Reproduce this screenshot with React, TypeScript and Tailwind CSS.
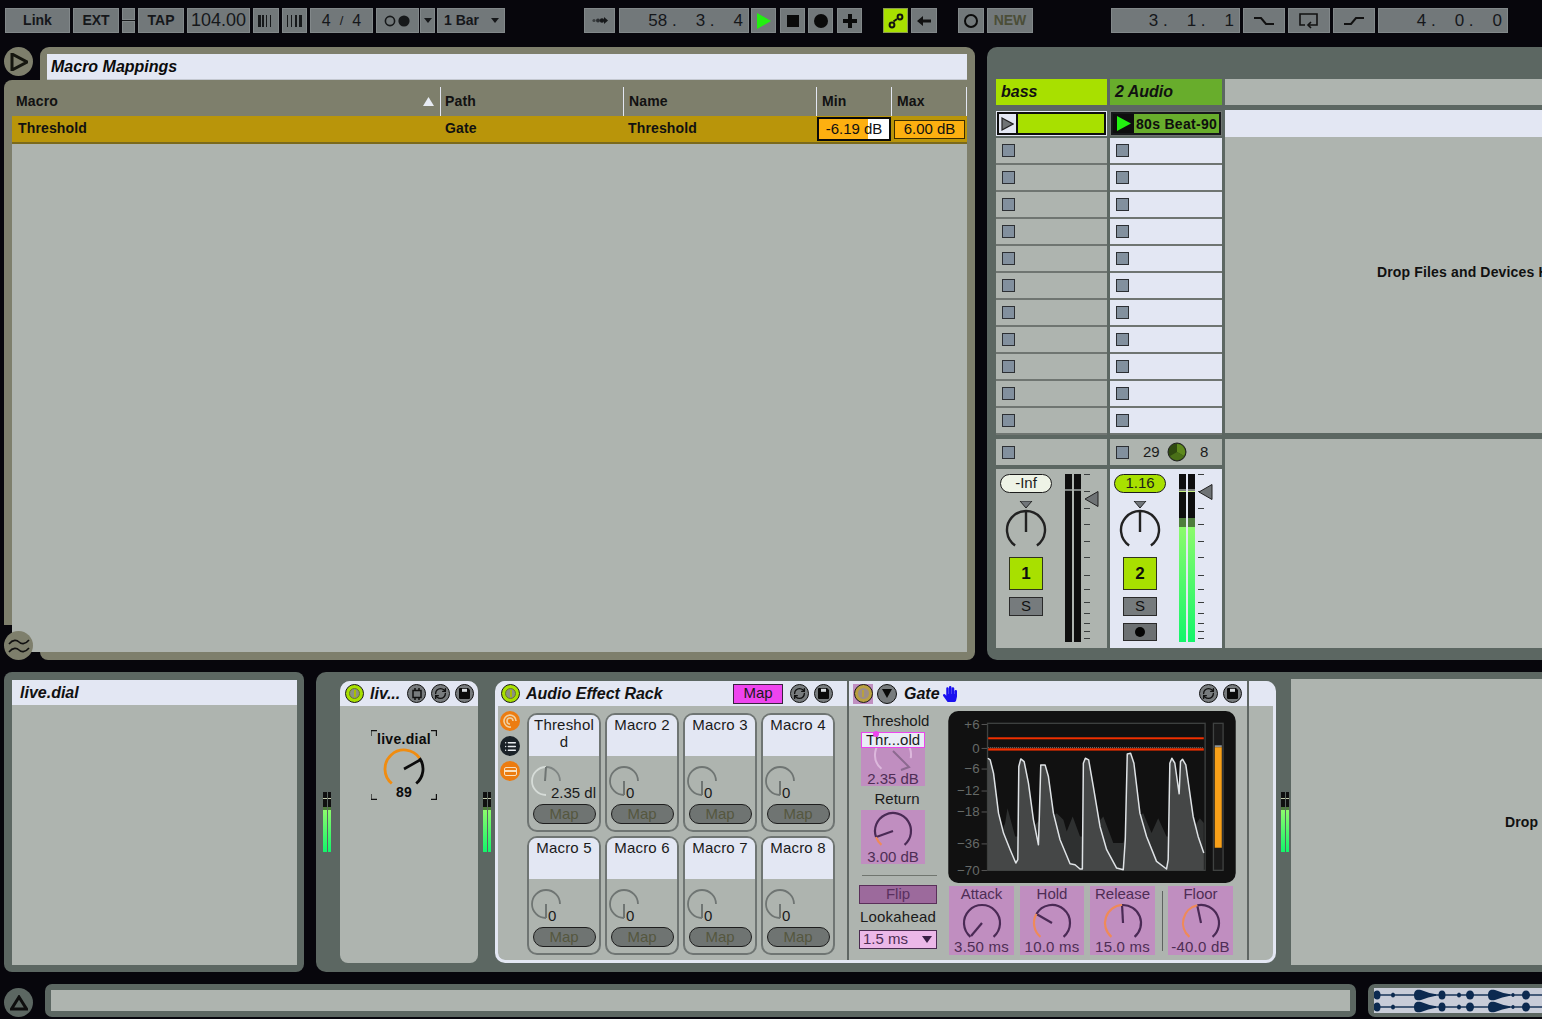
import React from "react";
import { List, RefreshCw } from "lucide-react";
import { FaHandPaper } from "react-icons/fa";

const pt = (cx: number, cy: number, r: number, a: number) => {
  const t = (a * Math.PI) / 180;
  return [+(cx + r * Math.sin(t)).toFixed(2), +(cy - r * Math.cos(t)).toFixed(2)];
};
const arc = (cx: number, cy: number, r: number, a0: number, a1: number) => {
  const [x0, y0] = pt(cx, cy, r, a0);
  const [x1, y1] = pt(cx, cy, r, a1);
  return `M${x0} ${y0}A${r} ${r} 0 ${a1 - a0 > 180 ? 1 : 0} 1 ${x1} ${y1}`;
};

const ctl =
  "h-[25px] shrink-0 bg-[#72787a] border border-[#82888a] flex items-center justify-center text-[#15171a] whitespace-nowrap";

function Bars({ reverse }: { reverse?: boolean }) {
  const w = [3, 2, 1, 1];
  const list = reverse ? [1, 1, 2, 3] : w;
  return (
    <svg width="18" height="12" viewBox="0 0 18 12">
      {list.map((b, i) => (
        <rect key={i} x={1 + i * 4} y="0" width={b} height="12" fill="#16181a" />
      ))}
    </svg>
  );
}

function Toolbar() {
  return (
    <div className="h-[47px] shrink-0 pt-[8px] pl-[5px] flex items-start">
      <div className={`${ctl} w-[65px] font-bold text-[14px]`}>Link</div>
      <div className={`${ctl} w-[46px] ml-[3px] font-bold text-[14px]`}>EXT</div>
      <div className="w-[13px] ml-[3px] h-[25px] flex flex-col shrink-0">
        <div className="h-[12px] bg-[#72787a] border border-[#82888a]" />
        <div className="h-[1px] bg-[#16181a]" />
        <div className="h-[12px] bg-[#72787a] border border-[#82888a]" />
      </div>
      <div className={`${ctl} w-[46px] ml-[3px] font-bold text-[14px]`}>TAP</div>
      <div className={`${ctl} w-[63px] ml-[3px] text-[18px]`}>104.00</div>
      <div className={`${ctl} w-[26px] ml-[3px]`}><Bars /></div>
      <div className={`${ctl} w-[25px] ml-[3px]`}><Bars reverse /></div>
      <div className={`${ctl} w-[63px] ml-[3px] text-[16px] gap-[9px]`}><span>4</span><span className="text-[13px]">/</span><span>4</span></div>
      <div className={`${ctl} w-[43px] ml-[3px]`}>
        <svg width="28" height="14" viewBox="0 0 28 14">
          <circle cx="6" cy="7" r="4.6" fill="none" stroke="#16181a" strokeWidth="1.6" />
          <circle cx="20" cy="7" r="5.6" fill="#16181a" />
        </svg>
      </div>
      <div className={`${ctl} w-[15px] ml-[1px]`}>
        <svg width="8" height="5"><path d="M0 0H8L4 5Z" fill="#16181a" /></svg>
      </div>
      <div className={`${ctl} w-[68px] ml-[2px] !justify-between pl-[6px] pr-[5px] font-bold text-[14px]`}>
        <span>1 Bar</span>
        <svg width="8" height="5"><path d="M0 0H8L4 5Z" fill="#16181a" /></svg>
      </div>

      <div className={`${ctl} w-[31px] ml-[79px]`}>
        <svg width="18" height="9" viewBox="0 0 18 9">
          <circle cx="3" cy="4.5" r="1.6" fill="#3a3e40" />
          <circle cx="7" cy="4.5" r="2" fill="#2a2d30" />
          <circle cx="11" cy="4.5" r="2.2" fill="#16181a" />
          <path d="M13 1L17 4.5L13 8Z" fill="#16181a" />
        </svg>
      </div>
      <div className={`${ctl} w-[130px] ml-[4px] !justify-end pr-[5px] text-[17px] gap-[19px]`}>
        <span>58 .</span><span>3 .</span><span>4</span>
      </div>
      <div className={`${ctl} w-[25px] ml-[2px]`}>
        <svg width="14" height="16"><path d="M0 0L14 8L0 16Z" fill="#22f010" /></svg>
      </div>
      <div className={`${ctl} w-[25px] ml-[4px]`}><div className="w-[12px] h-[12px] bg-[#0a0a0a]" /></div>
      <div className={`${ctl} w-[25px] ml-[3px]`}><div className="w-[14px] h-[14px] rounded-full bg-[#0a0a0a]" /></div>
      <div className={`${ctl} w-[25px] ml-[4px]`}>
        <svg width="14" height="14"><path d="M5 0H9V5H14V9H9V14H5V9H0V5H5Z" fill="#0a0a0a" /></svg>
      </div>
      <div className={`${ctl} w-[25px] ml-[21px] !bg-[#a8e000] !border-[#8a9a50]`}>
        <svg width="16" height="16" viewBox="0 0 16 16" fill="none" stroke="#111" strokeWidth="2">
          <circle cx="4" cy="12" r="2.4" />
          <circle cx="12" cy="4" r="2.4" />
          <path d="M5.5 8.5L9 6" />
        </svg>
      </div>
      <div className={`${ctl} w-[26px] ml-[3px]`}>
        <svg width="14" height="10"><path d="M0 5L6 0V3.5H14V6.5H6V10Z" fill="#111" /></svg>
      </div>
      <div className={`${ctl} w-[26px] ml-[21px]`}>
        <div className="w-[14px] h-[14px] rounded-full border-2 border-[#0a0a0a]" />
      </div>
      <div className={`${ctl} w-[46px] ml-[3px] font-bold text-[14px] !text-[#4b4e38]`}>NEW</div>

      <div className={`${ctl} w-[129px] ml-[78px] !justify-end pr-[5px] text-[17px] gap-[19px]`}>
        <span>3 .</span><span>1 .</span><span>1</span>
      </div>
      <div className={`${ctl} w-[42px] ml-[3px]`}>
        <svg width="20" height="12" fill="none" stroke="#111" strokeWidth="2"><path d="M0 3H7L12 9H20" /></svg>
      </div>
      <div className={`${ctl} w-[42px] ml-[3px]`}>
        <svg width="20" height="16" viewBox="0 0 20 16" fill="none" stroke="#111" strokeWidth="1.6">
          <path d="M6 12H1V1H18V12H10" />
          <path d="M12 9L9 12L12 15" />
        </svg>
      </div>
      <div className={`${ctl} w-[42px] ml-[3px]`}>
        <svg width="20" height="12" fill="none" stroke="#111" strokeWidth="2"><path d="M0 9H7L12 3H20" /></svg>
      </div>
      <div className={`${ctl} w-[130px] ml-[3px] !justify-end pr-[5px] text-[17px] gap-[19px]`}>
        <span>4 .</span><span>0 .</span><span>0</span>
      </div>
    </div>
  );
}

function CircleBtn({ className, children }: { className: string; children: React.ReactNode }) {
  return (
    <div className={`w-[29px] h-[29px] rounded-full flex items-center justify-center shrink-0 ${className}`}>
      {children}
    </div>
  );
}

function MacroPanel() {
  return (
    <div className="w-[971px] ml-[4px] flex flex-col relative">
      <div className="h-[33px] flex shrink-0">
        <div className="w-[36px]">
          <CircleBtn className="bg-[#7e7f6c]">
            <svg width="18" height="18"><path d="M2 1L17 9L2 17Z" fill="none" stroke="#15160f" strokeWidth="3" /></svg>
          </CircleBtn>
        </div>
        <div className="flex-1 bg-[#7e7f6c] rounded-t-[9px] pt-[7px] pl-[7px] pr-[8px]">
          <div className="h-[26px] bg-[#e3e7f3] border-b border-[#c4c8d0] flex items-center pl-[4px] font-bold italic text-[16px] text-[#0b0b0b]">
            Macro Mappings
          </div>
        </div>
      </div>
      <div className="flex-1 flex min-h-0">
        <div className="w-[8px] h-[545px] bg-[#7e7f6c] rounded-tl-[8px]" />
        <div className="flex-1 flex flex-col bg-[#7e7f6c]">
          <div className="h-[36px] pt-[7px] flex text-[14px] font-bold tracking-[0.15px] text-[#111]">
            <div className="w-[428px] h-[29px] flex items-center justify-between pl-[4px] pr-[6px]">
              <span>Macro</span>
              <svg width="11" height="9"><path d="M0 9L5.5 0L11 9Z" fill="#e8ecf4" /></svg>
            </div>
            <div className="w-[183px] h-[29px] border-l border-[#e3e7f3] pl-[4px] flex items-center">Path</div>
            <div className="w-[193px] h-[29px] border-l border-[#e3e7f3] pl-[5px] flex items-center">Name</div>
            <div className="w-[75px] h-[29px] border-l border-[#e3e7f3] pl-[5px] flex items-center">Min</div>
            <div className="w-[76px] h-[29px] border-x border-[#e3e7f3] pl-[5px] flex items-center">Max</div>
          </div>
          <div className="h-[28px] bg-[#b9950a] border-b-2 border-[#7b6a1c] flex items-center text-[14px] font-bold tracking-[0.15px] text-[#111]">
            <div className="w-[429px] pl-[6px] pb-[1px]">Threshold</div>
            <div className="w-[183px] pl-[4px] pb-[1px]">Gate</div>
            <div className="w-[193px] pl-[4px] pb-[1px]">Threshold</div>
            <div className="w-[74px] h-[24px] border-2 border-[#0a0a0a] bg-[linear-gradient(90deg,#fdb010_70%,#ffffff_70%)] flex items-center justify-center font-normal text-[15px] tracking-normal">-6.19 dB</div>
            <div className="w-[71px] h-[19px] ml-[3px] border border-[#3a2c00] bg-[#fdb010] flex items-center justify-center font-normal text-[15px] tracking-normal">6.00 dB</div>
          </div>
          <div className="flex-1 bg-[#aeb4af]" />
        </div>
        <div className="w-[8px] bg-[#7e7f6c]" />
      </div>
      <div className="h-[8px] shrink-0 flex">
        <div className="w-[36px]" />
        <div className="flex-1 bg-[#7e7f6c] rounded-b-[8px]" />
      </div>
      <div className="absolute left-0 bottom-0 w-[29px] h-[29px] rounded-full bg-[#7e7f6c] flex items-center justify-center">
        <svg width="22" height="16" viewBox="0 0 22 16" fill="none" stroke="#111" strokeWidth="1.6">
          <path d="M1 6C5 1 9 2 11 4S17 7 21 2" />
          <path d="M1 14C5 9 9 10 11 12S17 15 21 10" />
        </svg>
      </div>
    </div>
  );
}

const TICKS = [0, 17, 34, 50, 67, 83, 101, 115, 128, 139, 149, 157, 164];

function Mixer({ id, vol, pillBg, arm, tri, active }: { id: string; vol: string; pillBg: string; arm?: boolean; tri: number; active?: boolean }) {
  return (
    <div className="h-[179px] flex">
      <div className="w-[60px] flex flex-col items-center">
        <div className={`mt-[5px] w-[52px] h-[19px] rounded-full border border-[#1c1c1c] flex items-center justify-center text-[15px] text-[#1c1c1c] ${pillBg}`}>{vol}</div>
        <svg className="mt-[8px]" width="42" height="48" viewBox="0 0 42 48" fill="none">
          <path d="M15 0H27L21 7Z" fill="#71767a" stroke="#222" strokeWidth="1" />
          <path d={arc(21, 29, 19, -145, 145)} stroke="#222" strokeWidth="2.4" />
          <path d="M21 10V31" stroke="#222" strokeWidth="2.4" />
        </svg>
        <div className="mt-[8px] w-[34px] h-[33px] bg-[#a8e000] border border-[#30341c] flex items-center justify-center font-bold text-[17px] text-[#0e0e0e]">{id}</div>
        <div className="mt-[7px] w-[34px] h-[19px] bg-[#767b7d] border border-[#2a2a2a] flex items-center justify-center text-[15px] text-[#111]">S</div>
        {arm && (
          <div className="mt-[7px] w-[34px] h-[18px] bg-[#6c7072] border border-[#2a2a2a] flex items-center justify-center">
            <div className="w-[10px] h-[10px] rounded-full bg-[#050505]" />
          </div>
        )}
      </div>
      <div className="ml-[9px] mt-[5px] h-[168px] flex gap-[2px]">
        {[0, 1].map((i) => (
          <div key={i} className="w-[7px] h-full bg-[#0e0e0e] flex flex-col">
            <div className="h-[15px]" />
            <div className="h-[2px] bg-[#7d8280]" />
            {active ? (
              <>
                <div className="h-[1px] bg-[#c8f080]" />
                <div className="h-[26px]" />
                <div className="h-[9px] bg-[#4e7d3c]" />
                <div className="flex-1 bg-[linear-gradient(180deg,#8cfb6c,#12f56a)]" />
              </>
            ) : null}
          </div>
        ))}
      </div>
      <svg className="ml-[3px] mt-[5px]" width="16" height="168" viewBox="0 0 16 168">
        {TICKS.map((t) => (
          <rect key={t} x="0" y={t} width="6" height="1" fill="#3a3e3e" />
        ))}
        <path d={`M1 ${tri}L14 ${tri - 7.5}V${tri + 7.5}Z`} fill="#6f7375" stroke="#222" strokeWidth="1" />
      </svg>
    </div>
  );
}

function Stop() {
  return <div className="w-[13px] h-[13px] bg-[#82909e] border border-[#2c2f33]" />;
}

function Session() {
  const rows = Array.from({ length: 11 });
  return (
    <div className="flex-1 ml-[12px] bg-[#5c6762] rounded-tl-[10px] rounded-bl-[10px] pl-[9px] pt-[32px] pb-[12px] flex gap-[3px] overflow-hidden">
      <div className="w-[111px] shrink-0 flex flex-col">
        <div className="h-[26px] bg-[#a8e000] flex items-center pl-[5px] font-bold italic text-[16px] text-[#111]">bass</div>
        <div className="mt-[5px] h-[28px] shrink-0 pt-[1px]">
          <div className="h-[25px] bg-[#e3e7f3] p-[1px]">
            <div className="h-[23px] border-2 border-[#0e0e0e] flex bg-[#a8e000]">
              <div className="w-[19px] bg-[#e3e7f3] border-r-2 border-[#0e0e0e] flex items-center justify-center">
                <svg width="13" height="14"><path d="M1 1L12 7L1 13Z" fill="#6f7375" stroke="#222" strokeWidth="1.2" /></svg>
              </div>
            </div>
          </div>
        </div>
        {rows.map((_, i) => (
          <div key={i} className="h-[27px] shrink-0 bg-[#aeb4af] flex items-center pl-[6px] border-b-2 border-[#6f7571]"><Stop /></div>
        ))}
        <div className="mt-[4px] h-[26px] shrink-0 bg-[#aeb4af] flex items-center pl-[6px]"><Stop /></div>
        <div className="mt-[4px] bg-[#aeb4af]">
          <Mixer id="1" vol="-Inf" pillBg="bg-[#eef3e6]" tri={25} />
        </div>
      </div>
      <div className="w-[112px] shrink-0 flex flex-col">
        <div className="h-[26px] bg-[#68ad2c] flex items-center pl-[5px] font-bold italic text-[16px] text-[#111]">2 Audio</div>
        <div className="mt-[5px] h-[28px] shrink-0 pt-[1px]">
          <div className="h-[25px] bg-[#6f7571] p-[1px]">
            <div className="h-[23px] border-2 border-[#16181a] flex bg-[#68ad2c] items-center">
              <div className="w-[21px] h-full bg-[#0e0e0e] flex items-center justify-center shrink-0">
                <svg width="14" height="15"><path d="M0 0L14 7.5L0 15Z" fill="#22f010" /></svg>
              </div>
              <span className="pl-[2px] pt-[1px] font-bold text-[14px] tracking-[0.3px] text-[#0e0e0e] whitespace-nowrap">80s Beat-90</span>
            </div>
          </div>
        </div>
        {rows.map((_, i) => (
          <div key={i} className="h-[27px] shrink-0 bg-[#e3e7f3] flex items-center pl-[6px] border-b-2 border-[#6f7571]"><Stop /></div>
        ))}
        <div className="mt-[4px] h-[26px] shrink-0 bg-[#aeb4af] flex items-center pl-[6px] text-[15px] text-[#1b1b1b]">
          <Stop />
          <span className="ml-[14px] w-[24px]">29</span>
          <svg width="20" height="20" viewBox="0 0 20 20">
            <circle cx="10" cy="10" r="9" fill="#2f4a10" stroke="#222" strokeWidth="1" />
            <path d="M10 10V2A8 8 0 0 1 17 14Z" fill="#5f8a1e" />
            <path d="M10 10L17 14A8 8 0 0 1 3 14Z" fill="#4a7018" />
          </svg>
          <span className="ml-[13px]">8</span>
        </div>
        <div className="mt-[4px] bg-[#e3e7f3]">
          <Mixer id="2" vol="1.16" pillBg="bg-[#a8e000]" arm tri={18} active />
        </div>
      </div>
      <div className="flex-1 flex flex-col min-w-0">
        <div className="h-[26px] bg-[#aeb4af] shrink-0" />
        <div className="mt-[5px] h-[27px] bg-[#e3e7f3] shrink-0" />
        <div className="h-[296px] shrink-0 bg-[#aeb4af] flex items-center pl-[152px] font-bold text-[14px] tracking-[0.15px] text-[#111] whitespace-nowrap pb-[26px]">
          Drop Files and Devices Here
        </div>
        <div className="mt-[6px] h-[209px] bg-[#aeb4af] shrink-0" />
      </div>
    </div>
  );
}

function Meter({ className }: { className: string }) {
  return (
    <div className={`w-[8px] h-[60px] flex gap-[1px] shrink-0 ${className}`}>
      {[0, 1].map((i) => (
        <div key={i} className="flex-1 flex flex-col bg-[#101010]">
          <div className="h-[6px]" />
          <div className="h-[1px] bg-[#c0c8a8]" />
          <div className="h-[8px]" />
          <div className="h-[3px] bg-[#4e7d3c]" />
          <div className="flex-1 bg-[linear-gradient(180deg,#8cfb6c,#12f56a)]" />
        </div>
      ))}
    </div>
  );
}

function Activator() {
  return (
    <div className="w-[19px] h-[19px] rounded-full border border-[#1a1a1a] bg-[#a8e000] flex items-center justify-center shrink-0">
      <div className="w-[11px] h-[11px] rounded-full bg-[#8b9184] flex items-center justify-center border border-[#6a7a20]">
        <div className="w-[2px] h-[7px] bg-[#a8c000]" />
      </div>
    </div>
  );
}

function HBtn({ children }: { children: React.ReactNode }) {
  return (
    <div className="w-[19px] h-[19px] rounded-full bg-[#777b7d] border-[1.5px] border-[#111] flex items-center justify-center shrink-0">
      {children}
    </div>
  );
}

function Floppy() {
  return (
    <svg width="11" height="11" viewBox="0 0 11 11">
      <path d="M0 1Q0 0 1 0H9L11 2V10Q11 11 10 11H1Q0 11 0 10Z" fill="#0a0a0a" />
      <rect x="3" y="0.8" width="5" height="3" fill="#d8dce0" />
    </svg>
  );
}

function Swap() {
  return <RefreshCw size={13} strokeWidth={2.5} color="#111" />;
}

function LiveDevice() {
  return (
    <div className="w-[138px] h-[282px] rounded-t-[10px] rounded-b-[8px] overflow-hidden bg-[#aeb4af] flex flex-col shrink-0">
      <div className="h-[25px] bg-[#e3e7f3] flex items-center pl-[5px] shrink-0">
        <Activator />
        <span className="ml-[6px] w-[37px] font-bold italic text-[16px] text-[#111]">liv...</span>
        <div className="flex gap-[5px]">
          <HBtn>
            <svg width="12" height="12" viewBox="0 0 12 12" fill="none" stroke="#111" strokeWidth="1.5">
              <rect x="2" y="2.5" width="8" height="7" />
              <path d="M4 0V2.5M8 0V2.5M4 9.5V12M8 9.5V12" />
            </svg>
          </HBtn>
          <HBtn><Swap /></HBtn>
          <HBtn><Floppy /></HBtn>
        </div>
      </div>
      <div className="ml-[31px] mt-[24px] w-[66px] h-[70px] relative flex flex-col items-center text-[#0b0b0b] font-bold">
        <svg className="absolute inset-0" width="66" height="70" viewBox="0 0 66 70" fill="none" stroke="#111" strokeWidth="1.2">
          <path d="M0 6V0.6H6M60 0.6H65.4V6M0 64V69.4H6M60 69.4H65.4V64" />
        </svg>
        <span className="text-[14px] leading-[18px] tracking-[0.3px]">live.dial</span>
        <svg width="44" height="42" viewBox="0 0 44 42" fill="none" className="-mt-[1px]">
          <path d={arc(22, 22, 19, -140, 55)} stroke="#f08c10" strokeWidth="2.8" />
          <path d={arc(22, 22, 19, 55, 140)} stroke="#0c0c0c" strokeWidth="2.8" />
          <path d="M22 22L38 13" stroke="#0c0c0c" strokeWidth="2.6" />
        </svg>
        <span className="-mt-[5px] text-[14px] leading-[16px] tracking-[0.3px]">89</span>
      </div>
    </div>
  );
}

function MacroCell({ name, value, active }: { name: string; value: string; active?: boolean }) {
  return (
    <div className="h-[119px] rounded-[10px] border-2 border-[#6f7573] overflow-hidden flex flex-col items-center">
      <div className="w-full h-[41px] bg-[#e3e7f3] text-center text-[15px] leading-[17px] tracking-[0.2px] pt-[1px] text-[#1a1a1a] break-all px-[2px] shrink-0">{name}</div>
      <div className="w-full h-[49px] flex items-end relative shrink-0">
        <svg width="30" height="30" viewBox="0 0 30 30" fill="none" className="absolute left-[2px] top-[10px]">
          {active ? (
            <>
              <path d={arc(15, 15, 14, 180, 360)} stroke="#d6dcd8" strokeWidth="1.8" />
              <path d={arc(15, 15, 14, 0, 90)} stroke="#7f8583" strokeWidth="1.8" />
              <path d="M15 1L14 15" stroke="#6f7573" strokeWidth="2" />
            </>
          ) : (
            <>
              <path d={arc(15, 15, 14, 180, 450)} stroke="#6f7573" strokeWidth="1.8" />
              <path d="M15 15V29" stroke="#6f7573" strokeWidth="2" />
            </>
          )}
        </svg>
        <span className={`${active ? "ml-[22px]" : "ml-[19px]"} mb-[4px] text-[15px] leading-[16px] text-[#1a1a1a] whitespace-nowrap relative`}>{value}</span>
      </div>
      <div className="mt-[-1px] w-[63px] h-[20px] rounded-full bg-[#6f7472] border border-[#1e1e1e] flex items-center justify-center text-[15px] text-[#55573f] shrink-0">Map</div>
    </div>
  );
}

function Rack() {
  const cells: [string, string, boolean?][] = [
    ["Threshold", "2.35 dl", true],
    ["Macro 2", "0"],
    ["Macro 3", "0"],
    ["Macro 4", "0"],
    ["Macro 5", "0"],
    ["Macro 6", "0"],
    ["Macro 7", "0"],
    ["Macro 8", "0"],
  ];
  return (
    <div className="w-[349px] shrink-0 flex flex-col">
      <div className="h-[25px] bg-[#e3e7f3] flex items-center pl-[3px] pr-[14px] shrink-0">
        <Activator />
        <span className="ml-[6px] font-bold italic text-[16px] text-[#111]">Audio Effect Rack</span>
        <div className="ml-auto w-[50px] h-[20px] bg-[#ee44ee] border border-[#3a2040] flex items-center justify-center text-[15px] text-[#1a1a1a] mr-[7px]">Map</div>
        <div className="flex gap-[5px]">
          <HBtn><Swap /></HBtn>
          <HBtn><Floppy /></HBtn>
        </div>
      </div>
      <div className="flex-1 bg-[#aeb4af] flex pl-[2px] pt-[7px] rounded-bl-[7px]">
        <div className="w-[27px] flex flex-col gap-[5px] -mt-[2px] shrink-0">
          <div className="w-[20px] h-[20px] rounded-full bg-[#ec7c10] flex items-center justify-center">
            <svg width="14" height="14" viewBox="0 0 14 14" fill="none" stroke="#f0d0a0" strokeWidth="1.6">
              <path d="M8 13A6 6 0 1 1 13 7" /><path d="M7 10A3 3 0 1 1 10 7" />
            </svg>
          </div>
          <div className="w-[20px] h-[20px] rounded-full bg-[#1a2228] flex items-center justify-center">
            <List size={13} color="#e8ecf0" strokeWidth={2.5} />
          </div>
          <div className="w-[20px] h-[20px] rounded-full bg-[#ec7c10] flex items-center justify-center">
            <div className="w-[13px] h-[9px] rounded-[2px] border border-[#f8e0c0] flex items-center">
              <div className="w-full h-[2px] bg-[#f8e0c0]" />
            </div>
          </div>
        </div>
        <div className="grid grid-cols-[74px_74px_74px_74px] gap-x-[4px] gap-y-[4px] content-start">
          {cells.map(([n, v, a]) => (
            <MacroCell key={n} name={n} value={v} active={a} />
          ))}
        </div>
      </div>
    </div>
  );
}

function PinkKnob({ value, from = -140 }: { value: number; from?: number }) {
  return (
    <svg width="44" height="40" viewBox="0 0 44 40" fill="none">
      <path d={arc(22, 21, 18, value, 140)} stroke="#4a2a55" strokeWidth="2.2" />
      {value > from && <path d={arc(22, 21, 18, from, value)} stroke="#ef8a58" strokeWidth="2.2" />}
      {(() => {
        const [x, y] = pt(22, 21, 17, value);
        return <path d={`M22 21L${x} ${y}`} stroke="#4a2a55" strokeWidth="2.2" />;
      })()}
    </svg>
  );
}

function ParamBox({ label, value, angle, className }: { label: string; value: string; angle: number; className: string }) {
  return (
    <div className={`h-[69px] bg-[#c08ec0] flex flex-col items-center text-[#4e2d55] text-[15px] leading-[16px] shrink-0 ${className}`}>
      <span className="whitespace-nowrap">{label}</span>
      <PinkKnob value={angle} />
      <span className="-mt-[3px] whitespace-nowrap tracking-[0.2px]">{value}</span>
    </div>
  );
}

const ENV =
  "413,235 420,240 430,280 445,400 460,460 480,510 497,550 503,540 506,260 512,237 522,245 535,310 550,420 565,495 568,400 572,255 585,255 595,290 610,400 630,480 660,552 675,555 690,568 697,568 700,250 706,235 716,240 730,320 750,440 770,510 800,565 820,570 826,480 832,222 842,220 852,250 870,400 890,470 920,545 950,568 955,540 960,250 966,235 975,250 988,342 992,245 998,238 1008,255 1030,410 1045,470 1062,520";
const BG =
  "413,570 413,420 450,470 465,430 472,385 495,470 505,470 540,450 570,420 600,420 620,400 640,420 650,455 668,410 690,470 700,470 735,440 760,410 790,490 820,490 840,420 880,400 905,460 925,415 950,470 1000,470 1035,440 1050,415 1062,430 1062,570";

function Graph() {
  const labels: [string, number][] = [["+6", 146], ["0", 218], ["−6", 280], ["−12", 346], ["−18", 409], ["−36", 505], ["−70", 585]];
  return (
    <svg width="288" height="172" viewBox="294 93 864 517" className="shrink-0">
      <rect x="294" y="93" width="864" height="517" rx="30" fill="#111" />
      {labels.map(([t, y]) => (
        <text key={t} x="388" y={y} textAnchor="end" fontSize="40" fontFamily="Liberation Sans" fill="#666a68">{t}</text>
      ))}
      {labels.map(([t, y]) => (
        <rect key={`l${t}`} x="394" y={y - 14} width="18" height="3" fill="#555" />
      ))}
      <rect x="412" y="130" width="654" height="442" fill="none" stroke="#3f4241" strokeWidth="4" />
      <polygon points={BG} fill="#2e3030" />
      <polygon points={`413,572 ${ENV} 1062,572`} fill="#454747" />
      <polyline points={ENV} fill="none" stroke="#dfe3e6" strokeWidth="4.5" strokeLinejoin="round" />
      <rect x="414" y="172" width="648" height="6" fill="#f03000" />
      <rect x="414" y="205" width="648" height="7" fill="#f03000" />
      <line x1="414" y1="203" x2="1062" y2="203" stroke="#aaa" strokeWidth="2" strokeDasharray="3 3" />
      <rect x="1091" y="130" width="29" height="442" fill="#1a1a1a" stroke="#3f4241" strokeWidth="4" />
      <rect x="1095" y="196" width="21" height="6" fill="#8f9496" />
      <rect x="1095" y="202" width="21" height="302" fill="#f8a018" />
    </svg>
  );
}

function Gate() {
  return (
    <div className="w-[398px] shrink-0 flex flex-col">
      <div className="h-[25px] bg-[#e3e7f3] flex items-center pr-[5px] shrink-0">
        <div className="ml-[4px] w-[20px] h-[20px] bg-[#c08ec0] flex items-center justify-center">
          <div className="w-[19px] h-[19px] rounded-full border border-[#1a1a1a] bg-[#b9a040] flex items-center justify-center">
            <div className="w-[11px] h-[11px] rounded-full bg-[#9d8d88] flex items-center justify-center">
              <div className="w-[2px] h-[7px] bg-[#b8a040]" />
            </div>
          </div>
        </div>
        <div className="ml-[4px] w-[20px] h-[20px] rounded-full bg-[#777b7d] border-[1.5px] border-[#111] flex items-center justify-center">
          <svg width="10" height="9"><path d="M0 0H10L5 9Z" fill="#0a0a0a" /></svg>
        </div>
        <span className="ml-[7px] font-bold italic text-[16px] text-[#111]">Gate</span>
        <FaHandPaper size={16} color="#1a10f0" className="ml-[2px]" />
        <div className="ml-auto flex gap-[5px]">
          <HBtn><Swap /></HBtn>
          <HBtn><Floppy /></HBtn>
        </div>
      </div>
      <div className="flex-1 bg-[#aeb4af] flex">
        <div className="w-[78px] ml-[10px] shrink-0 flex flex-col items-center">
          <span className="mt-[6px] mr-[4px] h-[18px] text-[15px] leading-[17px] text-[#1a1a1a]">Threshold</span>
          <div className="self-start ml-[2px] w-[64px] h-[54px] bg-[#c08ec0] flex flex-col items-center relative mt-[2px]">
            <div className="w-full h-[16px] bg-[#e9ecf6] border border-[#ee44ee] text-[15px] leading-[14px] text-center text-[#1a1a1a]">Thr...old</div>
            <div className="absolute left-[12px] -top-[1px] w-[6px] h-[6px] rounded-full bg-[#ee44ee]" />
            <svg width="44" height="24" viewBox="0 14 44 24" fill="none">
              <path d={arc(22, 21, 18, -140, 100)} stroke="#dcb8dc" strokeWidth="2" />
              <path d="M22 17L38 33L30 36" stroke="#8c6a90" strokeWidth="2" />
            </svg>
            <span className="text-[15px] leading-[14px] text-[#4e2d55]">2.35 dB</span>
          </div>
          <span className="mt-[4px] mr-[2px] h-[18px] text-[15px] leading-[17px] text-[#1a1a1a]">Return</span>
          <div className="self-start ml-[2px] w-[64px] h-[54px] mt-[2px] bg-[#c08ec0] flex flex-col items-center text-[#4e2d55]">
            <PinkKnob value={-110} />
            <span className="text-[15px] leading-[14px]">3.00 dB</span>
          </div>
          <div className="mt-[11px] ml-[3px] self-start w-[75px] h-[1px] bg-[#70756f]" />
          <div className="mt-[9px] w-[78px] h-[19px] bg-[#9c6a9c] border border-[#5a2f5a] flex items-center justify-center text-[15px] text-[#5a3060]">Flip</div>
          <span className="mt-[4px] h-[18px] text-[15px] leading-[17px] tracking-[0.2px] text-[#1a1a1a] whitespace-nowrap">Lookahead</span>
          <div className="mt-[4px] w-[78px] h-[19px] bg-[#ecb8e8] border border-[#4a2a50] flex items-center justify-between pl-[3px] pr-[4px] text-[15px] text-[#4e2d55]">
            <span>1.5 ms</span>
            <svg width="10" height="7"><path d="M0 0H10L5 7Z" fill="#3a1f45" /></svg>
          </div>
        </div>
        <div className="ml-[11px] flex flex-col pt-[5px]">
          <Graph />
          <div className="mt-[3px] flex ml-[1px]">
            <ParamBox label="Attack" value="3.50 ms" angle={-140} className="w-[65px]" />
            <ParamBox label="Hold" value="10.0 ms" angle={-60} className="w-[64px] ml-[6px]" />
            <ParamBox label="Release" value="15.0 ms" angle={-3} className="w-[65px] ml-[6px]" />
            <div className="w-[1px] h-[60px] mt-[5px] ml-[7px] bg-[#5f6461]" />
            <ParamBox label="Floor" value="-40.0 dB" angle={-12} className="w-[65px] ml-[5px]" />
          </div>
        </div>
      </div>
    </div>
  );
}

function BottomPanels() {
  return (
    <div className="h-[300px] mt-[12px] shrink-0 flex">
      <div className="w-[300px] ml-[4px] bg-[#5c6762] rounded-[8px] pl-[8px] pr-[7px] pt-[8px] pb-[7px] flex flex-col shrink-0">
        <div className="h-[25px] bg-[#e3e7f3] flex items-center pl-[8px] font-bold italic text-[16px] text-[#111]">live.dial</div>
        <div className="flex-1 bg-[#aeb4af]" />
      </div>
      <div className="flex-1 ml-[12px] bg-[#5c6762] rounded-l-[10px] flex pt-[9px] pl-[7px] overflow-hidden">
        <Meter className="mt-[111px]" />
        <div className="ml-[9px]"><LiveDevice /></div>
        <Meter className="mt-[111px] ml-[5px]" />
        <div className="ml-[4px] w-[781px] h-[282px] shrink-0 rounded-[10px] border-x-[3px] border-b-[3px] border-[#e3e7f3] bg-[#e3e7f3] flex overflow-hidden">
          <Rack />
          <div className="w-[2px] bg-[#5f6663] shrink-0" />
          <Gate />
          <div className="w-[2px] bg-[#5f6663] shrink-0" />
          <div className="flex-1 flex flex-col">
            <div className="h-[25px] bg-[#e3e7f3]" />
            <div className="flex-1 bg-[#aeb4af]" />
          </div>
        </div>
        <Meter className="mt-[111px] ml-[5px]" />
        <div className="ml-[2px] mb-[7px] mt-[-2px] flex-1 bg-[#aeb4af] flex items-center pl-[214px] font-bold text-[14px] tracking-[0.15px] text-[#111] whitespace-nowrap">
          Drop Files and Devices Here
        </div>
      </div>
    </div>
  );
}

function Waveform() {
  const blobs: [number, number, number][] = [[3, 3.5, 4.5], [19, 2, 2.6], [68, 3.5, 4.5], [85, 2, 2.6], [96, 4, 4.5], [139, 1.6, 2], [152, 4, 4.5]];
  const bigs = [40, 114];
  const row = (y: number) => (
    <g key={y} fill="#0c2a50">
      <rect x="0" y={y - 0.7} width="168" height="1.4" />
      {blobs.map(([x, rx, ry]) => (
        <ellipse key={x} cx={x} cy={y} rx={rx} ry={ry} />
      ))}
      {bigs.map((x) => (
        <path key={x} d={`M${x} ${y}C${x} ${y - 5} ${x + 3} ${y - 6} ${x + 7} ${y - 5}Q${x + 14} ${y - 2} ${x + 22} ${y - 0.7}V${y + 0.7}Q${x + 14} ${y + 2} ${x + 7} ${y + 5}C${x + 3} ${y + 6} ${x} ${y + 5} ${x} ${y}Z`} />
      ))}
    </g>
  );
  return (
    <svg width="168" height="25" viewBox="0 0 168 25">
      {row(7)}
      {row(19)}
    </svg>
  );
}

function StatusBar() {
  return (
    <div className="h-[33px] mt-[12px] shrink-0 flex items-stretch">
      <div className="w-[45px] pl-[4px] pt-[4px] shrink-0">
        <CircleBtn className="bg-[#5c6762]">
          <svg width="18" height="16"><path d="M9 2L16.5 14H1.5Z" fill="none" stroke="#0e0e0e" strokeWidth="3" /></svg>
        </CircleBtn>
      </div>
      <div className="w-[1311px] bg-[#5c6762] rounded-[7px] px-[6px] pt-[6px] pb-[6px] shrink-0">
        <div className="h-[21px] bg-[#aeb4af]" />
      </div>
      <div className="flex-1 ml-[12px] bg-[#5c6762] rounded-l-[7px] pl-[6px] pt-[4px] pb-[4px]">
        <div className="h-[25px] bg-[#c8ccd8]"><Waveform /></div>
      </div>
    </div>
  );
}

export default function App() {
  return (
    <div className="w-[1542px] h-[1019px] bg-[#07060c] flex flex-col overflow-hidden font-['Liberation_Sans',Arial,sans-serif]">
      <Toolbar />
      <div className="h-[613px] shrink-0 flex">
        <MacroPanel />
        <Session />
      </div>
      <BottomPanels />
      <StatusBar />
    </div>
  );
}
